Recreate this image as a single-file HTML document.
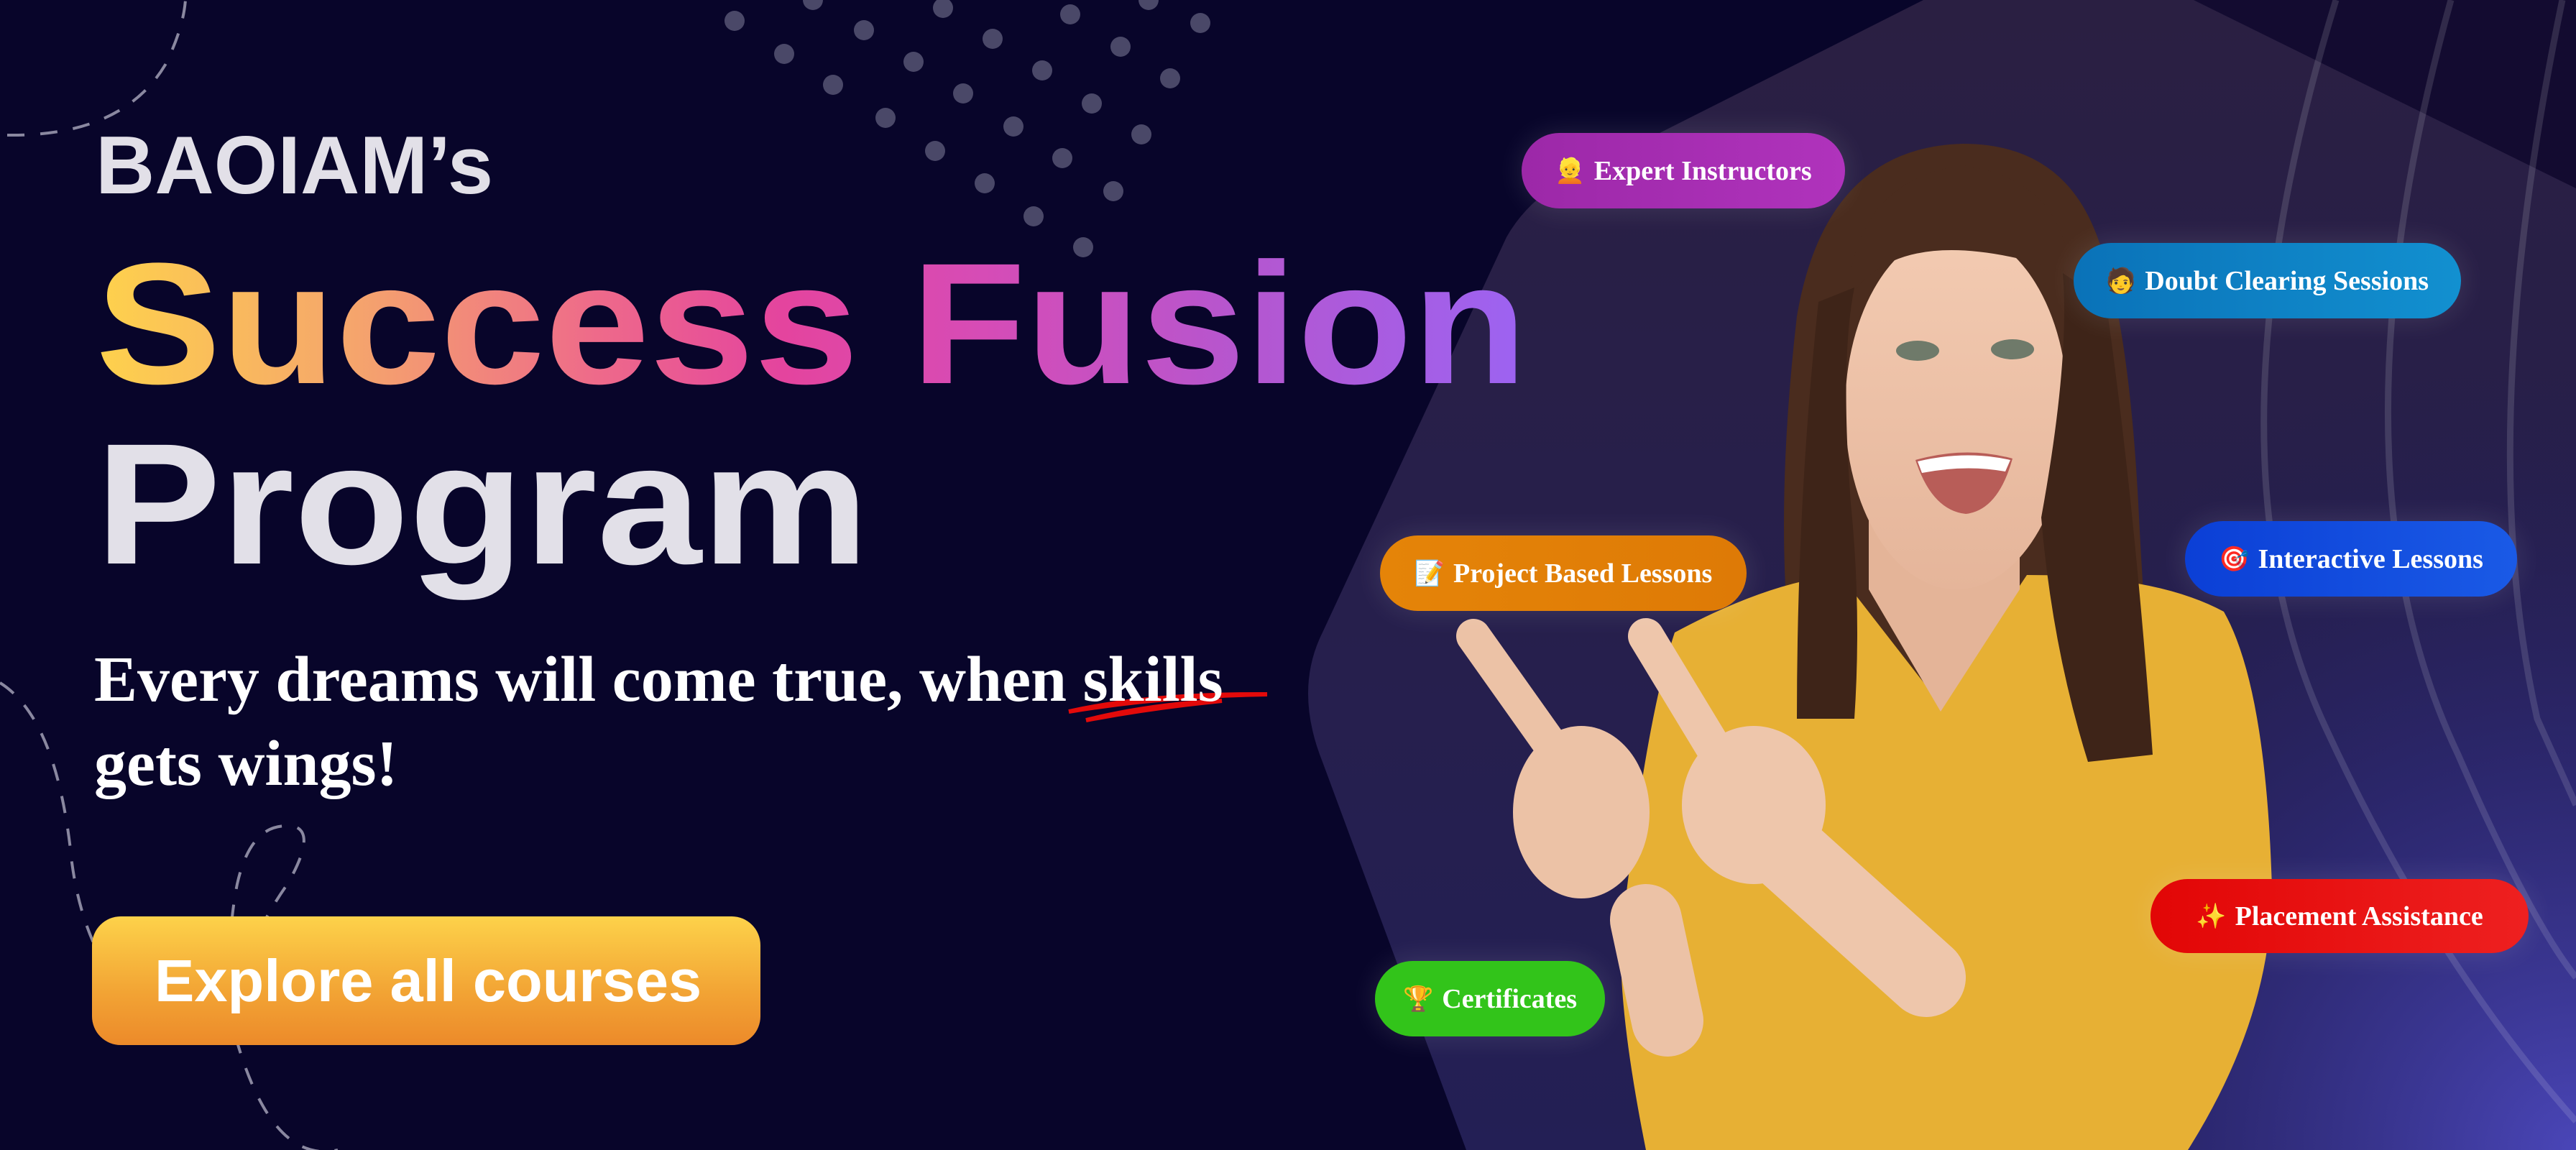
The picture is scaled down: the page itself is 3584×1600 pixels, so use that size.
<!DOCTYPE html>
<html><head><meta charset="utf-8"><style>
*{margin:0;padding:0;box-sizing:border-box}
body{width:3584px;height:1600px;overflow:hidden;background:#08052a;position:relative;font-family:"Liberation Sans",sans-serif}
.abs{position:absolute;white-space:nowrap}
.h{font-weight:700;line-height:1;color:#e2e0e8;transform-origin:left top;transform:scaleX(1.09)}
.grad{background:linear-gradient(90deg,#fed24c 0%,#f5a56c 18%,#ee6a8a 35%,#e4449e 48%,#d64cb6 62%,#b556cf 80%,#9c63f2 100%);-webkit-background-clip:text;background-clip:text;color:transparent}
.sub{font-family:"Liberation Serif",serif;font-weight:700;font-size:90px;line-height:117px;color:#fff}
.pill{position:absolute;border-radius:60px;font-family:"Liberation Serif","DejaVu Sans",serif;font-weight:700;font-size:38px;color:#fff;display:flex;align-items:center;justify-content:center;white-space:nowrap;box-shadow:0 0 40px rgba(255,255,255,0.12)}
.pill span{margin-right:12px;font-size:34px}
</style></head><body>
<svg class="abs" style="left:0;top:0" width="3584" height="1600" viewBox="0 0 3584 1600">
<defs>
<radialGradient id="glow" cx="3584" cy="1600" r="1100" gradientUnits="userSpaceOnUse">
<stop offset="0" stop-color="#4a46b8"/><stop offset="0.5" stop-color="#2e2a78" stop-opacity="0.7"/><stop offset="1" stop-color="#201b4e" stop-opacity="0"/></radialGradient>
<linearGradient id="hex" x1="0" y1="0" x2="0" y2="1"><stop offset="0" stop-color="#2a1f42"/><stop offset="1" stop-color="#231f55"/></linearGradient>
<linearGradient id="skin" x1="0" y1="0" x2="0" y2="1"><stop offset="0" stop-color="#f3cbb2"/><stop offset="1" stop-color="#e5b59a"/></linearGradient>
</defs>
<path d="M3052 0 L3584 0 L3584 262 Z" fill="#130b30"/>
<path d="M2676 0 L3052 0 L3584 262 L3584 1600 L2040 1600 L1840 1060 Q1800 960 1840 880 L2096 330 Q2130 270 2200 240 Z" fill="url(#hex)"/>
<rect x="1800" y="500" width="1784" height="1100" fill="url(#glow)"/>
<g fill="none" stroke="rgba(255,255,255,0.13)" stroke-width="9">
<path d="M3250 0 Q3060 620 3230 1000 Q3380 1330 3584 1560"/>
<path d="M3410 0 Q3230 650 3420 1050 Q3520 1280 3584 1360"/>
<path d="M3565 0 Q3440 600 3530 1000 L3584 1120"/>
</g>
<g fill="#4a4868">
<circle cx="1022" cy="29" r="14"/><circle cx="1091" cy="75" r="14"/><circle cx="1159" cy="118" r="14"/><circle cx="1232" cy="164" r="14"/><circle cx="1301" cy="210" r="14"/><circle cx="1370" cy="255" r="14"/><circle cx="1438" cy="301" r="14"/><circle cx="1507" cy="344" r="14"/>
<circle cx="1131" cy="0" r="14"/><circle cx="1202" cy="42" r="14"/><circle cx="1271" cy="86" r="14"/><circle cx="1340" cy="130" r="14"/><circle cx="1410" cy="176" r="14"/><circle cx="1478" cy="220" r="14"/><circle cx="1549" cy="266" r="14"/>
<circle cx="1312" cy="11" r="14"/><circle cx="1381" cy="54" r="14"/><circle cx="1450" cy="98" r="14"/><circle cx="1519" cy="144" r="14"/><circle cx="1588" cy="187" r="14"/>
<circle cx="1489" cy="20" r="14"/><circle cx="1559" cy="65" r="14"/><circle cx="1628" cy="109" r="14"/>
<circle cx="1670" cy="32" r="14"/><circle cx="1598" cy="0" r="14"/>
</g>
<g fill="none" stroke="#8a88a0" stroke-width="4" stroke-dasharray="24 22">
<path d="M10 188 Q170 190 230 90 Q255 40 258 0"/>
<path d="M0 950 Q80 1000 100 1200 Q120 1350 220 1430 Q300 1470 320 1400 Q350 1300 400 1230 Q440 1160 410 1150 Q350 1140 330 1230 Q310 1330 330 1450 Q380 1620 470 1600"/>
</g>
<path d="M1487 990 Q1600 965 1763 966 Q1620 968 1487 990 Z M1511 1002 Q1600 980 1700 975 Q1600 985 1511 1002 Z" fill="#e30a0a" stroke="#e30a0a" stroke-width="6"/>
<!-- woman -->
<path d="M2731 200 Q2540 205 2500 440 Q2470 700 2490 900 Q2480 1000 2475 1040 L2720 1000 L3000 1050 Q2985 900 2975 700 Q2960 420 2910 310 Q2860 200 2731 200 Z" fill="#4a2c1e"/>
<path d="M2330 880 Q2460 810 2560 800 L2700 980 L2820 800 Q3000 800 3094 851 Q3150 950 3160 1208 Q3170 1400 3044 1600 L2290 1600 Q2250 1400 2256 1300 Q2290 1000 2330 880 Z" fill="#e7b034"/>
<path d="M2600 700 L2600 820 L2700 990 L2810 820 L2810 700 Z" fill="#e4b498"/>
<ellipse cx="2722" cy="570" rx="155" ry="250" fill="url(#skin)"/>
<path d="M2570 420 Q2640 300 2880 380 Q2870 250 2731 230 Q2580 250 2570 420 Z" fill="#4a2c1e"/>
<path d="M2840 720 Q2880 500 2870 380 L2930 420 Q2970 700 2995 1050 L2905 1060 Q2855 900 2840 720 Z" fill="#3e2418"/>
<path d="M2575 700 Q2560 500 2580 400 L2530 420 Q2500 700 2500 1000 L2580 1000 Q2590 850 2575 700 Z" fill="#3e2418"/>
<ellipse cx="2668" cy="488" rx="30" ry="14" fill="#6f7a6a"/><ellipse cx="2800" cy="486" rx="30" ry="14" fill="#6f7a6a"/>
<path d="M2665 640 Q2735 620 2800 638 Q2780 710 2735 715 Q2688 710 2665 640 Z" fill="#b85d58"/>
<path d="M2668 642 Q2735 626 2797 640 L2790 656 Q2735 646 2674 658 Z" fill="#fff"/>
<g stroke-linecap="round" fill="none">
<path d="M2050 885 L2160 1040" stroke="#ecc2a6" stroke-width="48"/>
<path d="M2290 885 L2390 1050" stroke="#eec6ab" stroke-width="50"/>
<path d="M2290 1280 L2320 1420" stroke="#ecc2a6" stroke-width="100"/>
<path d="M2480 1180 L2680 1360" stroke="#eec6ab" stroke-width="110"/>
</g>
<ellipse cx="2200" cy="1130" rx="95" ry="120" fill="#ecc2a6"/>
<ellipse cx="2440" cy="1120" rx="100" ry="110" fill="#eec6ab"/>
</svg>
<div class="abs h" style="left:133px;top:174px;font-size:114px;transform:none">BAOIAM’s</div>
<div class="abs h grad" style="left:133px;top:330px;font-size:240px">Success Fusion</div>
<div class="abs h" style="left:133px;top:581px;font-size:240px">Program</div>
<div class="abs sub" style="left:131px;top:887px">Every dreams will come true, when skills<br>gets wings!</div>
<div class="abs" style="left:128px;top:1275px;width:930px;height:179px;border-radius:40px;background:linear-gradient(180deg,#fdd24a,#f2a334 60%,#ec8a2a);color:#fff;font-weight:700;font-size:83px;line-height:179px;padding-left:87px">Explore all courses</div>
<div class="pill" style="left:2117px;top:185px;width:450px;height:105px;background:linear-gradient(90deg,#9c28a8,#b033bc)"><span>👱</span>Expert Instructors</div>
<div class="pill" style="left:2885px;top:338px;width:539px;height:105px;background:linear-gradient(90deg,#0a72b8,#1290d0)"><span>🧑</span>Doubt Clearing Sessions</div>
<div class="pill" style="left:1920px;top:745px;width:510px;height:105px;background:linear-gradient(90deg,#e58408,#de7a06)"><span>📝</span>Project Based Lessons</div>
<div class="pill" style="left:3040px;top:725px;width:462px;height:105px;background:linear-gradient(90deg,#0b3fd6,#1a5ae6)"><span>🎯</span>Interactive Lessons</div>
<div class="pill" style="left:2992px;top:1223px;width:526px;height:103px;background:linear-gradient(90deg,#e20606,#ee2020)"><span style="color:#ffd84a">✨</span>Placement Assistance</div>
<div class="pill" style="left:1913px;top:1337px;width:320px;height:105px;background:#32c41a"><span>🏆</span>Certificates</div>
</body></html>
